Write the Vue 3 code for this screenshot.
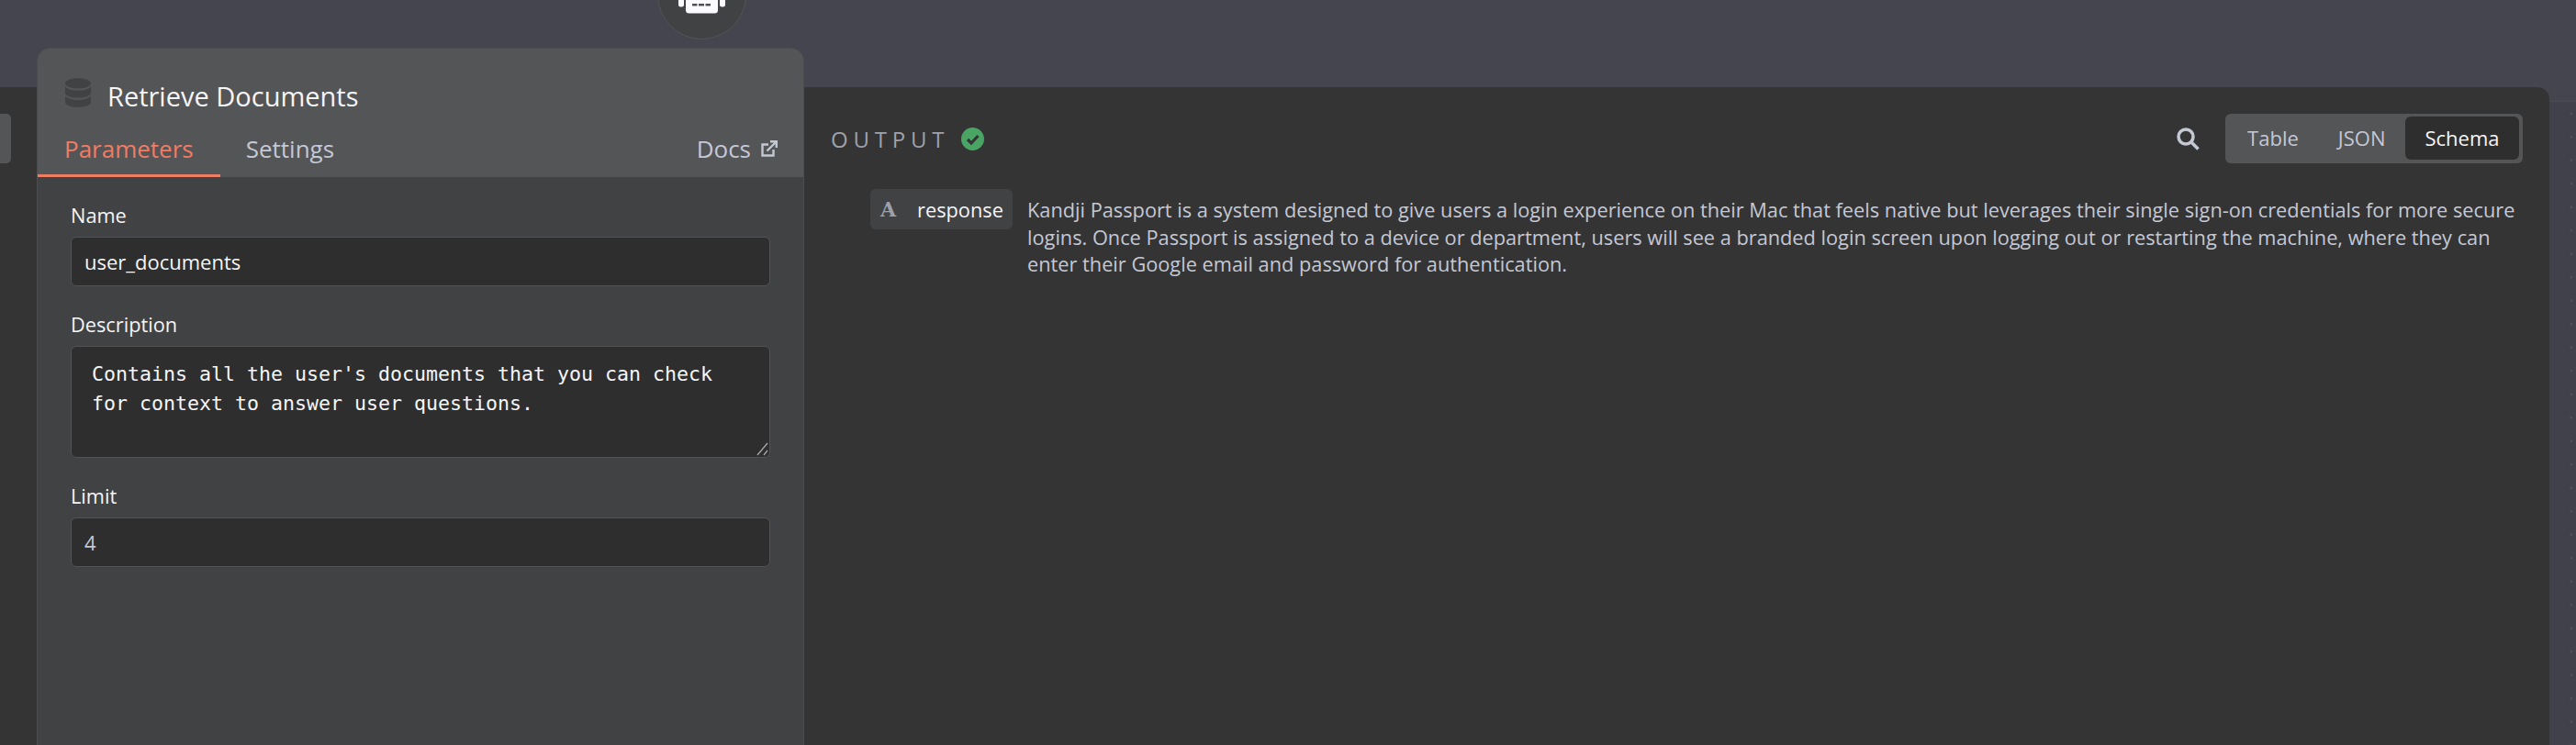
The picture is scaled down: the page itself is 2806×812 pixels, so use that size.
<template>
  <div class="page">
    <div class="canvas-top">
      <div class="node-circle">
        <svg class="robot" width="51" height="16" viewBox="0 0 51 16">
          <path d="M0 0h6v5a2.500 2.500 0 0 1-2.500 2.500h-1A2.500 2.500 0 0 1 0 5zM45 0h6v5a2.500 2.500 0 0 1-2.500 2.500h-1A2.500 2.500 0 0 1 45 5z" fill="#fbfbff"/>
          <path d="M8 0h35v11a3.500 3.500 0 0 1-3.500 3.500h-28A3.500 3.500 0 0 1 8 11z" fill="#fbfbff"/>
          <rect x="15" y="4" width="5.500" height="2.500" fill="#505156"/>
          <rect x="22" y="4" width="6" height="2.500" fill="#505156"/>
          <rect x="29.500" y="4" width="5.500" height="2.500" fill="#505156"/>
        </svg>
      </div>
    </div>

    <main class="output-pane">
      <div class="left-tab"></div>
      <div class="right-strip"></div>

      <section class="output">
        <header class="output-head">
          <div class="output-title">
            <span>OUTPUT</span>
            <svg width="25" height="25" viewBox="0 0 25 25">
              <circle cx="12.500" cy="12.500" r="12.500" fill="#4aa564"/>
              <path d="M7 13l4 4 7.500-8" fill="none" stroke="#343434" stroke-width="3.200"/>
            </svg>
          </div>
          <div class="output-tools">
            <svg class="search" width="26" height="26" viewBox="0 0 26 26">
              <circle cx="11" cy="11" r="8" fill="none" stroke="#c4c8d4" stroke-width="3.500"/>
              <path d="M16.500 16.500L24.500 24.500" stroke="#c4c8d4" stroke-width="3.500"/>
            </svg>
            <div class="switch">
              <span v-for="o in modes" :key="o" class="mode" :class="{ on: o === 'Schema' }">{{ o }}</span>
            </div>
          </div>
        </header>
        <div class="schema-row">
          <div class="pill">
            <span class="pill-type">A</span>
            <span>response</span>
          </div>
          <p class="schema-text">{{ responseText }}</p>
        </div>
      </section>
    </main>

    <aside class="panel">
      <div class="panel-head">
        <div class="panel-title">
          <svg width="28" height="32" viewBox="0 0 30 34">
            <path d="M0 6c0-3.500 6.500-6 15-6s15 2.500 15 6-6.500 6-15 6S0 9.500 0 6z" fill="#414244"/>
            <path d="M0 10c2.500 3 8 4.500 15 4.500S27.500 13 30 10v7c0 3.500-6.500 6-15 6S0 20.500 0 17z" fill="#414244"/>
            <path d="M0 21c2.500 3 8 4.500 15 4.500S27.500 24 30 21v7c0 3.500-6.500 6-15 6S0 31.500 0 28z" fill="#414244"/>
          </svg>
          <h2>Retrieve Documents</h2>
        </div>
        <nav class="tabs">
          <a class="tab active">Parameters</a>
          <a class="tab">Settings</a>
          <a class="docs">Docs
            <svg width="18" height="18" viewBox="0 0 18 18">
              <path d="M13.500 10v6.500H1.500V4.500H8" fill="none" stroke="#c4c8d4" stroke-width="2.400"/>
              <path d="M6.500 11.500L16 2M10 1.200h6.800V8" fill="none" stroke="#c4c8d4" stroke-width="2.400"/>
            </svg>
          </a>
        </nav>
      </div>
      <div class="panel-body">
        <label class="field-label">Name</label>
        <div class="input">user_documents</div>
        <label class="field-label">Description</label>
        <div class="input area">
          Contains all the user's documents that you can check for context to answer user questions.
          <svg class="grip" width="13" height="15" viewBox="0 0 13 15">
            <path d="M1 14L12 1M8 14l4-5" stroke="#a8a8a8" stroke-width="1.300"/>
          </svg>
        </div>
        <label class="field-label">Limit</label>
        <div class="input muted">4</div>
      </div>
    </aside>
  </div>
</template>

<script setup>
const modes = ['Table', 'JSON', 'Schema']
const responseText = 'Kandji Passport is a system designed to give users a login experience on their Mac that feels native but leverages their single sign-on credentials for more secure logins. Once Passport is assigned to a device or department, users will see a branded login screen upon logging out or restarting the machine, where they can enter their Google email and password for authentication.'
</script>

<style>
html, body { background: #45454f; overflow: hidden; }
</style>

<style scoped>
.page {
  position: relative;
  width: 2806px;
  height: 812px;
  overflow: hidden;
  background: #45454f;
  font-family: "Open Sans", "Noto Sans", sans-serif;
  color: #f5f5f7;
}
.canvas-top { height: 95px; }
.node-circle {
  position: absolute;
  left: 716px;
  top: -54px;
  width: 97px;
  height: 97px;
  box-sizing: border-box;
  border-radius: 50%;
  background: #414244;
  border: 1px solid #525357;
}
.robot { position: absolute; left: 22px; top: 53px; }

.output-pane {
  position: relative;
  height: 717px;
  width: 2777px;
  background: #343434;
  border-top-right-radius: 13px;
}
.left-tab {
  position: absolute;
  left: 0;
  top: 29px;
  width: 12px;
  height: 54px;
  background: #545557;
  border-radius: 0 5px 5px 0;
}
.right-strip {
  position: absolute;
  left: 2777px;
  top: 15px;
  width: 29px;
  height: 702px;
  box-sizing: border-box;
  border-top: 1px solid #4b4b56;
  background-color: #41414b;
  background-image: radial-gradient(circle, #55555f 1.2px, transparent 1.6px);
  background-size: 25.500px 25.500px;
  background-position: 11px 0;
}
.output { margin-left: 875px; padding: 29px 29px 0 30px; }
.output-head {
  display: flex;
  align-items: center;
  justify-content: space-between;
  height: 54px;
}
.output-title {
  display: flex;
  align-items: center;
  gap: 13px;
  font-size: 24px;
  font-weight: 500;
  letter-spacing: 5.800px;
  color: #9ea1ab;
}
.output-tools { display: flex; align-items: center; gap: 28px; }
.switch {
  display: flex;
  padding: 3px 4px 4px 3px;
  background: #545557;
  border-radius: 6px;
}
.mode {
  padding: 0 21.500px;
  height: 47px;
  line-height: 47px;
  font-size: 22px;
  color: #c4c8d4;
  border-radius: 6px;
}
.mode.on { background: #2e2e2e; color: #f5f5f7; }

.schema-row { display: flex; gap: 16px; margin: 28px 0 0 43px; }
.pill {
  display: flex;
  align-items: center;
  flex: none;
  box-sizing: border-box;
  width: 155px;
  gap: 23px;
  height: 44px;
  padding: 0 11px;
  background: #414244;
  border-radius: 6px;
  font-size: 21.750px;
}
.pill-type {
  font-family: "DejaVu Serif", serif;
  font-weight: 700;
  font-size: 22px;
  color: #9ea1ab;
}
.schema-text {
  margin: 0;
  padding-top: 8px;
  font-size: 21.750px;
  line-height: 29.500px;
  color: #c4c8d4;
}

.panel {
  position: absolute;
  left: 40px;
  top: 52px;
  width: 836px;
  height: 780px;
  box-sizing: border-box;
  background: #414244;
  border: 1px solid #4c4d50;
  border-radius: 14px 14px 0 0;
  overflow: hidden;
}
.panel-head { height: 140px; box-sizing: border-box; background: #545557; padding-top: 32px; }
.panel-title { display: flex; align-items: flex-start; gap: 18px; padding-left: 30px; height: 36px; }
h2 { margin: 0; font-size: 29px; line-height: 40px; font-weight: 500; color: #f5f5f7; }
.tabs { display: flex; align-items: flex-start; margin-top: 19px; height: 53px; position: relative; }
.tab {
  padding: 0 29px;
  height: 50px;
  line-height: 44px;
  font-size: 26px;
  font-weight: 500;
  color: #c4c8d4;
}
.tab.active { color: #f07c64; border-bottom: 3px solid #f07c64; }
.tab + .tab { padding-left: 28px; }
.docs {
  display: flex;
  align-items: center;
  gap: 11px;
  margin-left: auto;
  padding-right: 28px;
  height: 44px;
  font-size: 26px;
  font-weight: 500;
  color: #c4c8d4;
}
.panel-body { display: flex; flex-direction: column; padding: 27px 36px 0; }
.field-label { font-size: 21.750px; line-height: 30px; color: #f5f5f7; margin-bottom: 8px; }
.input {
  position: relative;
  box-sizing: border-box;
  height: 54px;
  line-height: 52px;
  padding: 0 14px;
  margin-bottom: 27px;
  background: #2e2e2e;
  border: 1px solid #525357;
  border-radius: 6px;
  font-size: 22px;
  color: #f5f5f7;
}
.muted { color: #c4c8d4; }
.area {
  height: 122px;
  padding: 14px 22px;
  line-height: 32px;
  font-family: "DejaVu Sans Mono", monospace;
  font-size: 21.600px;
}
.grip { position: absolute; right: 1px; bottom: 1px; }
</style>
